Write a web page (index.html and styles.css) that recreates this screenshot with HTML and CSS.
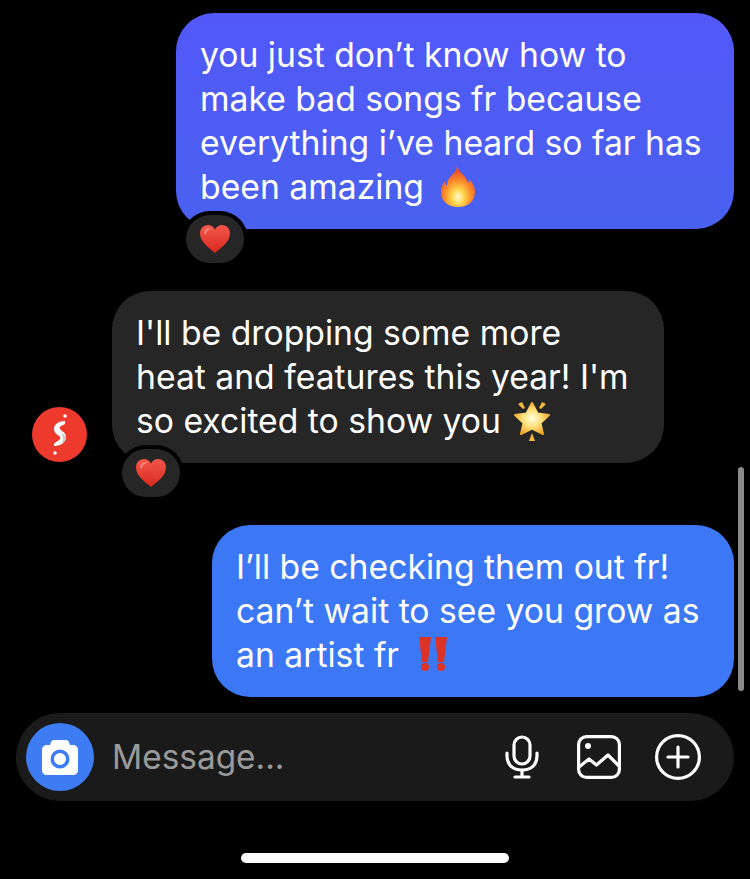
FILE: index.html
```html
<!DOCTYPE html>
<html lang="en">
<head>
<meta charset="utf-8">
<title>Chat</title>
<link rel="stylesheet" href="styles.css">
</head>
<body>
<div class="screen">
  <main class="thread">
    <div class="row-out first">
      <div class="bubble violet">
        you just don’t know how to<br>make bad songs fr because<br>everything i’ve heard so far has<br>been amazing
        <svg class="emoji flame" viewBox="0 0 34 42"><defs><radialGradient id="fl" cx="50%" cy="76%" r="62%"><stop offset="0" stop-color="#fffbd0"/><stop offset=".3" stop-color="#ffd44a"/><stop offset=".65" stop-color="#fb8a2a"/><stop offset="1" stop-color="#e8502a"/></radialGradient></defs><path fill="url(#fl)" d="M16 0c1 6 5 8 8 12 2 2 2 4 3 6 1-1 1-2 1-4 4 4 6 8 6 13 0 9-7 15-17 15S0 36 0 27c0-5 2-8 4-11 0 2 1 4 2 5 0-4 1-7 4-10 3-3 6-6 6-11z"/></svg>
        <span class="reaction"><svg class="heart" viewBox="0 0 30 28"><defs><linearGradient id="h1" x1="0" y1="0" x2="0" y2="1"><stop offset="0" stop-color="#f4574a"/><stop offset="1" stop-color="#d9281f"/></linearGradient></defs><path fill="url(#h1)" d="M15 28C9 23 0 17 0 8.500 0 3.500 3.500 0 8 0c3 0 5.500 1.500 7 4.500C16.500 1.500 19 0 22 0c4.500 0 8 3.500 8 8.500C30 17 21 23 15 28z"/><path fill="#fff" opacity=".28" d="M4 8c0-3 2-5 5-5 1 0 2 .3 3 1-3 0-5 2-6 5-.7 1-2 .5-2-1z"/></svg></span>
      </div>
    </div>
    <div class="row-in">
      <div class="avatar"><svg viewBox="0 0 14 41" class="avatar-mark"><path fill="#fff" d="M12 7C6 7 1 10 1 15c0 4 3 5 5 7 2 1 2 3 0 4-2 2-5 2-5 5v1c4 0 12-2 12-9 0-4-3-5-5-7-2-1-2-3 0-4 1-1 4-1 4-3z"/><path fill="#c9c9c9" d="M8 19c2 1 5 3 5 4 0 5-5 8-9 9 4-2 6-4 6-7 0-2-1-4-2-6z"/><circle cx="12" cy="2" r="1.800" fill="#fff"/><circle cx="2" cy="39" r="1.800" fill="#fff"/></svg></div>
      <div class="bubble dark">
        I'll be dropping some more<br>heat and features this year! I'm<br>so excited to show you
        <svg class="emoji star" viewBox="0 0 38 40"><defs><radialGradient id="st" cx="50%" cy="50%" r="55%"><stop offset="0" stop-color="#fffde0"/><stop offset=".5" stop-color="#ffe07a"/><stop offset="1" stop-color="#eda32a"/></radialGradient></defs><path fill="url(#st)" stroke="url(#st)" stroke-width="2" stroke-linejoin="round" d="M19 2l5.500 10.500L36 14l-8.500 8L30 33l-11-5.500L8 33l2.500-11L2 14l11.500-1.500z"/><path fill="#f0b93a" d="M5 3l4-2 3 6-2 1zM33 3l-4-2-3 6 2 1zM16 40l3-8 3 8z"/></svg>
        <span class="reaction"><svg class="heart" viewBox="0 0 30 28"><defs><linearGradient id="h2" x1="0" y1="0" x2="0" y2="1"><stop offset="0" stop-color="#f4574a"/><stop offset="1" stop-color="#d9281f"/></linearGradient></defs><path fill="url(#h2)" d="M15 28C9 23 0 17 0 8.500 0 3.500 3.500 0 8 0c3 0 5.500 1.500 7 4.500C16.500 1.500 19 0 22 0c4.500 0 8 3.500 8 8.500C30 17 21 23 15 28z"/><path fill="#fff" opacity=".28" d="M4 8c0-3 2-5 5-5 1 0 2 .3 3 1-3 0-5 2-6 5-.7 1-2 .5-2-1z"/></svg></span>
      </div>
    </div>
    <div class="row-out last">
      <div class="bubble blue">
        I’ll be checking them out fr!<br>can’t wait to see you grow as<br>an artist fr
        <svg class="emoji bang" viewBox="0 0 30 34"><path fill="#dc3327" d="M1 0h12l-3 25H4zM17 0h12l-3 25h-6z"/><circle cx="7" cy="30" r="4" fill="#dc3327"/><circle cx="23" cy="30" r="4" fill="#dc3327"/></svg>
      </div>
    </div>
  </main>

  <form class="composer">
    <div class="camera">
      <svg width="36" height="35" viewBox="0 0 36 35"><path fill="#fff" fill-rule="evenodd" d="M8 5l1-3c.5-1.300 1.500-2 3-2h12c1.500 0 2.500.7 3 2l1 3h3c3 0 5 2 5 5v20c0 3-2 5-5 5H5c-3 0-5-2-5-5V10c0-3 2-5 5-5zM18 9.500a9.500 9.500 0 1 0 0 19 9.500 9.500 0 0 0 0-19zM18 13a6 6 0 1 1 0 12 6 6 0 0 1 0-12z"/></svg>
    </div>
    <div class="placeholder">Message...</div>
    <div class="tools">
      <svg class="mic" width="34" height="44" viewBox="0 0 34 44" fill="none" stroke="#fff" stroke-width="3.200" stroke-linecap="round"><rect x="9" y="2" width="16" height="27" rx="8"/><path d="M2 18v3c0 9 6 14 15 14s15-5 15-14v-3M17 35v7M10 42h14"/></svg>
      <svg width="44" height="44" viewBox="0 0 44 44" fill="none" stroke="#fff" stroke-width="3.200" stroke-linejoin="round" stroke-linecap="round"><rect x="1.600" y="1.600" width="40.800" height="40.800" rx="8"/><path d="M2 32l10-8 7.500 6L31 20l11 11"/><circle cx="11" cy="11" r="3" fill="#fff" stroke="none"/></svg>
      <svg width="46" height="46" viewBox="0 0 46 46" fill="none" stroke="#fff" stroke-width="3.200" stroke-linecap="round"><circle cx="23" cy="23" r="21.400"/><path d="M23 13v20M13 23h20"/></svg>
    </div>
  </form>
  <div class="home-bar"></div>
  <div class="scrollbar"></div>
</div>
</body>
</html>
```
FILE: styles.css
```css
* { box-sizing: border-box; }
html, body { margin: 0; background: #000; }
.screen {
  position: relative;
  width: 750px;
  height: 879px;
  overflow: hidden;
  background: #000;
  font-family: Inter, "Liberation Sans", sans-serif;
  color: #fff;
  display: flex;
  flex-direction: column;
}
.thread {
  display: flex;
  flex-direction: column;
  padding: 13px 16px 0 0;
}
.row-out { display: flex; justify-content: flex-end; }
.row-out.last { margin-top: 62px; }
.row-in {
  display: flex;
  align-items: flex-end;
  gap: 25px;
  margin-top: 62px;
  padding-left: 32px;
}
.bubble {
  position: relative;
  border-radius: 38px;
  padding: 20px 24px;
  font-size: 33.7px;
  line-height: 44px;
  white-space: nowrap;
}
.violet { width: 558px; background: linear-gradient(180deg, #5258f8, #4961ef); }
.dark { width: 552px; background: #262626; }
.blue { width: 522px; background: #3c78f5; }
.emoji { display: inline-block; margin-top: -12px; }
.flame { width: 34px; height: 42px; margin-left: 8px; vertical-align: -8px; }
.star { width: 38px; height: 40px; margin-left: 3px; vertical-align: -8px; }
.bang { width: 30px; height: 34px; margin-left: 9px; vertical-align: -4px; }
.reaction {
  position: absolute;
  left: 10px;
  bottom: -34px;
  width: 58px;
  height: 48px;
  border-radius: 24px;
  background: #262626;
  box-shadow: 0 0 0 4px #000;
  display: flex;
  align-items: center;
  justify-content: center;
}
.heart { width: 30px; height: 28px; }
.avatar {
  flex: none;
  width: 55px;
  height: 55px;
  margin-bottom: 1px;
  border-radius: 50%;
  background: #ee392d;
  display: flex;
  align-items: center;
  justify-content: center;
}
.avatar-mark { width: 14px; height: 41px; }
.composer {
  margin: 16px 16px 0;
  height: 88px;
  border-radius: 44px;
  background: #1a1a1a;
  display: flex;
  align-items: center;
  padding: 0 33px 0 10px;
}
.camera {
  flex: none;
  width: 68px;
  height: 68px;
  border-radius: 50%;
  background: #3d7cf2;
  display: flex;
  align-items: center;
  justify-content: center;
}
.placeholder {
  flex: 1;
  margin-left: 18px;
  font-size: 33.4px;
  color: #9a9a9a;
}
.tools { display: flex; align-items: center; gap: 34px; }
.mic { margin-right: 4px; }
.home-bar {
  align-self: center;
  margin-top: 52px;
  width: 268px;
  height: 10px;
  border-radius: 5px;
  background: #fff;
}
.scrollbar {
  position: absolute;
  left: 738px;
  top: 467px;
  width: 6px;
  height: 224px;
  border-radius: 3px;
  background: #8a8a8a;
}
```
